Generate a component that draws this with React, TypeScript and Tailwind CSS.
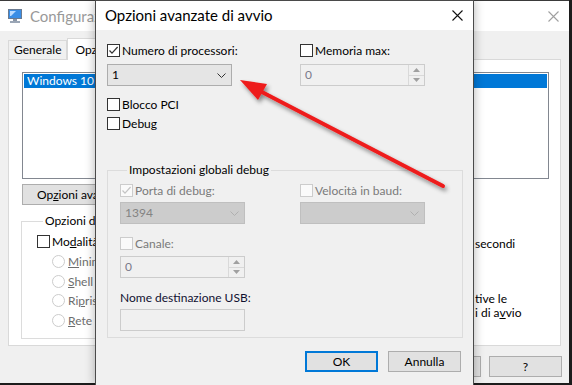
import React from 'react';

const font = "font-['Lato','Noto_Sans',sans-serif]";

function CheckBox({ checked = false, disabled = false }: { checked?: boolean; disabled?: boolean }) {
  return (
    <span
      className={
        disabled
          ? 'flex h-[13px] w-[13px] shrink-0 items-center justify-center border border-[#cccccc] bg-[#fafafa]'
          : 'flex h-[13px] w-[13px] shrink-0 items-center justify-center border border-[#333333] bg-white'
      }
    >
      {checked && (
        <svg width="11" height="11" viewBox="0 0 11 11">
          <path d="M1.5 5.5 L4 8.2 L9.6 2" fill="none" stroke={disabled ? '#c4c4c4' : '#333333'} strokeWidth="1.2" />
        </svg>
      )}
    </span>
  );
}

function CheckRow({ label, checked, disabled }: { label: React.ReactNode; checked?: boolean; disabled?: boolean }) {
  return (
    <div className="flex h-[13px] items-center gap-[2px]">
      <CheckBox checked={checked} disabled={disabled} />
      <span className={disabled ? 'text-[12px] leading-[13px] text-[#7a7a7a]' : 'text-[12px] leading-[13px] text-black'}>
        {label}
      </span>
    </div>
  );
}

// text of the back window that runs under the dialog is cut at its left edge
function Clip({ className, children }: { className: string; children: React.ReactNode }) {
  return <span className={`inline-block overflow-hidden whitespace-nowrap align-top ${className}`}>{children}</span>;
}

function Chevron({ color }: { color: string }) {
  return (
    <svg width="9" height="5" viewBox="0 0 9 5">
      <path d="M0.5 0.5 L4.5 4.5 L8.5 0.5" fill="none" stroke={color} strokeWidth="1" />
    </svg>
  );
}

function Combo({ value, disabled }: { value: string; disabled?: boolean }) {
  return (
    <div
      className={
        disabled
          ? 'flex h-[22px] w-[125px] items-center justify-between border border-[#bfbfbf] bg-[#cccccc] pl-[4px] pr-[5px] text-[12px] text-[#838383]'
          : 'flex h-[22px] w-[125px] items-center justify-between border border-[#adadad] bg-[#e5e5e5] pl-[4px] pr-[5px] text-[12px] text-black'
      }
    >
      <span>{value}</span>
      <Chevron color={disabled ? '#b0b0b0' : '#333333'} />
    </div>
  );
}

function Spin({ value }: { value: string }) {
  return (
    <div className="flex h-[22px] w-[125px] border border-[#cccccc] bg-[#f0f0f0]">
      <span className="flex-1 pl-[4px] text-[12px] leading-[20px] text-[#7a7a8a]">{value}</span>
      <div className="flex w-[16px] flex-col border-l border-[#d9d9d9]">
        <div className="flex flex-1 items-center justify-center border-b border-[#d9d9d9]">
          <svg width="7" height="4" viewBox="0 0 7 4">
            <path d="M0 4 L3.5 0 L7 4 Z" fill="#a0a0a0" />
          </svg>
        </div>
        <div className="flex flex-1 items-center justify-center">
          <svg width="7" height="4" viewBox="0 0 7 4">
            <path d="M0 0 L3.5 4 L7 0 Z" fill="#a0a0a0" />
          </svg>
        </div>
      </div>
    </div>
  );
}

function Radio({ label }: { label: React.ReactNode }) {
  return (
    <div className="flex h-[13px] items-center gap-[3px]">
      <span className="h-[13px] w-[13px] shrink-0 rounded-full border border-[#cccccc] bg-white" />
      <Clip className="w-[27px] text-[12px] leading-[13px] text-[#6d6d6d]">{label}</Clip>
    </div>
  );
}

function MonitorIcon() {
  return (
    <svg width="16" height="16" viewBox="0 0 16 16">
      <rect x="1" y="1" width="14" height="10" fill="#6a7a90" />
      <rect x="2" y="2" width="12" height="8" fill="#3a8ee6" />
      <path d="M3 3 L9 3 L4 8 L3 8 Z" fill="#bcdcff" />
      <rect x="6" y="11" width="4" height="2" fill="#8a96a6" />
      <rect x="3" y="13" width="10" height="2" fill="#9aa6b6" />
    </svg>
  );
}

function CloseX({ color }: { color: string }) {
  return (
    <svg width="11" height="11" viewBox="0 0 11 11">
      <path d="M0.5 0.5 L10.5 10.5 M10.5 0.5 L0.5 10.5" stroke={color} strokeWidth="1.1" />
    </svg>
  );
}

function BackgroundWindow() {
  return (
    <div className="flex h-[383px] w-[569px] flex-col border-t border-[#3a3a3a] bg-[#f0f0f0]">
      <div className="flex h-[30px] items-center bg-white pl-[7px] pr-[10px]">
        <MonitorIcon />
        <Clip className="ml-[7px] w-[66px] text-[15px] leading-[20px] text-[#999999]">Configurazione di sistema</Clip>
        <span className="ml-auto">
          <CloseX color="#a0a0a0" />
        </span>
      </div>
      <div className="flex flex-col px-[8px] pt-[7px]">
        <div className="flex h-[21px] items-end">
          <div className="flex h-[19px] items-center border border-b-0 border-[#d9d9d9] bg-[#f0f0f0] px-[5px] text-[12px]">
            Generale
          </div>
          <div className="relative z-10 -mb-px flex h-[22px] w-[100px] items-center border border-b-0 border-[#d9d9d9] bg-white pl-[7px] text-[12px]">
            <Clip className="w-[27px]">Opzioni di avvio</Clip>
          </div>
        </div>
        <div className="flex h-[287px] flex-col border border-[#d9d9d9] bg-white pl-[13px] pt-[12px]">
          <div className="h-[107px] w-[527px] border border-[#828790] p-[1px]">
            <div className="h-[14px] bg-[#0078d7] pl-[3px] text-[12px] leading-[14px] text-white">
              <Clip className="w-[70px]">Windows 10 (C:\WINDOWS) : Sistema operativo corrente</Clip>
            </div>
          </div>
          <div className="mt-[5px] flex h-[21px] w-[150px] items-center border border-[#adadad] bg-[#e1e1e1] pl-[14px] text-[12px]">
            <Clip className="w-[59px]">
              Op<u>z</u>ioni avanzate...
            </Clip>
          </div>
          <div className="grid grid-cols-[453px_1fr]">
            <fieldset className="-ml-px mt-[8px] h-[126px] w-[300px] border border-[#dcdcdc] pl-[15px]">
              <legend className="ml-[6px] px-[2px] text-[12px] leading-[16px]">
                <Clip className="w-[64px]">Opzioni di avvio</Clip>
              </legend>
              <div className="mt-[6px] flex flex-col gap-[7px]">
                <div className="flex h-[13px] items-center gap-[2px]">
                  <CheckBox />
                  <Clip className="w-[44px] text-[12px] leading-[13px]">
                    Mo<u>d</u>alità provvisoria
                  </Clip>
                </div>
                <div className="flex flex-col gap-[6.5px] pl-[15px]">
                  <Radio label={<><u>M</u>inima</>} />
                  <Radio label={<><u>S</u>hell alternativa</>} />
                  <Radio label={<>Ri<u>p</u>ristino AD</>} />
                  <Radio label={<><u>R</u>ete</>} />
                </div>
              </div>
            </fieldset>
            <div className="flex flex-col text-[12px] leading-[14px]">
              <span className="mt-[32px]">secondi</span>
              <span className="mt-[41px]">tive le</span>
              <span>i di a<u>v</u>vio</span>
            </div>
          </div>
        </div>
      </div>
      <div className="mt-[10px] flex justify-end gap-[8px] pr-[7px]">
        <div className="h-[21px] w-[73px] border border-[#adadad] bg-[#e1e1e1]" />
        <div className="flex h-[21px] w-[73px] items-center justify-center border border-[#adadad] bg-[#e1e1e1] text-[12px]">
          ?
        </div>
      </div>
    </div>
  );
}

function Dialog() {
  return (
    <div className="absolute left-[95px] top-0 z-20 flex h-[385px] w-[379px] flex-col border-x border-t border-[#4a4a4a] bg-[#f0f0f0] shadow-[0_0_10px_rgba(0,0,0,0.3)]">
      <div className="flex h-[29px] items-center bg-white pl-[9px] pr-[10px]">
        <span className="text-[15px] text-black">Opzioni avanzate di avvio</span>
        <span className="ml-auto">
          <CloseX color="#111111" />
        </span>
      </div>
      <div className="flex flex-col pl-[11px] pr-[10px] pt-[14px]">
        <div className="grid grid-cols-[193px_1fr]">
          <div className="flex flex-col gap-[7px]">
            <CheckRow label="Numero di processori:" checked />
            <Combo value="1" />
          </div>
          <div className="flex flex-col gap-[7px]">
            <CheckRow label="Memoria max:" />
            <Spin value="0" />
          </div>
        </div>
        <div className="mt-[12px] flex flex-col gap-[6px]">
          <CheckRow label="Blocco PCI" />
          <CheckRow label="Debug" />
        </div>
        <fieldset className="mt-[32px] h-[176px] border border-[#dcdcdc] pl-[12px]">
          <legend className="ml-[7px] px-[2px] text-[12px] leading-[16px]">Impostazioni globali debug</legend>
          <div className="mt-[6px] grid grid-cols-[180px_1fr]">
            <div className="flex flex-col gap-[5px]">
              <CheckRow label="Porta di debug:" checked disabled />
              <Combo value="1394" disabled />
            </div>
            <div className="flex flex-col gap-[5px]">
              <CheckRow label="Velocità in baud:" disabled />
              <Combo value="" disabled />
            </div>
          </div>
          <div className="mt-[13px] flex flex-col gap-[6px]">
            <CheckRow label="Canale:" disabled />
            <Spin value="0" />
          </div>
          <div className="mt-[13px] text-[12px] leading-[14px] text-[#101030]">Nome destinazione USB:</div>
          <div className="mt-[4px] h-[22px] w-[125px] border border-[#cccccc] bg-[#f0f0f0]" />
        </fieldset>
        <div className="mt-[13px] flex justify-end gap-[10px] pr-[2px]">
          <div className="flex h-[21px] w-[73px] items-center justify-center border-2 border-[#0078d7] bg-[#e1e1e1] text-[12px]">
            OK
          </div>
          <div className="flex h-[21px] w-[73px] items-center justify-center border border-[#adadad] bg-[#e1e1e1] text-[12px]">
            Annulla
          </div>
        </div>
      </div>
    </div>
  );
}

function Arrow() {
  return (
    <svg className="pointer-events-none absolute left-0 top-0 z-30" width="572" height="385" viewBox="0 0 572 385">
      <defs>
        <filter id="sh" x="-20%" y="-20%" width="140%" height="140%">
          <feDropShadow dx="2" dy="3" stdDeviation="2" floodColor="#000" floodOpacity="0.45" />
        </filter>
      </defs>
      <g filter="url(#sh)">
        <path d="M443 186 L258 90" stroke="#ee1c1c" strokeWidth="4" strokeLinecap="round" />
        <path d="M240 80 L267 84 L258 100 Z" fill="#ee1c1c" />
      </g>
    </svg>
  );
}

export default function App() {
  return (
    <div className={`relative h-[385px] w-[572px] overflow-hidden bg-[#1c1c1c] ${font}`}>
      <BackgroundWindow />
      <Dialog />
      <Arrow />
    </div>
  );
}
